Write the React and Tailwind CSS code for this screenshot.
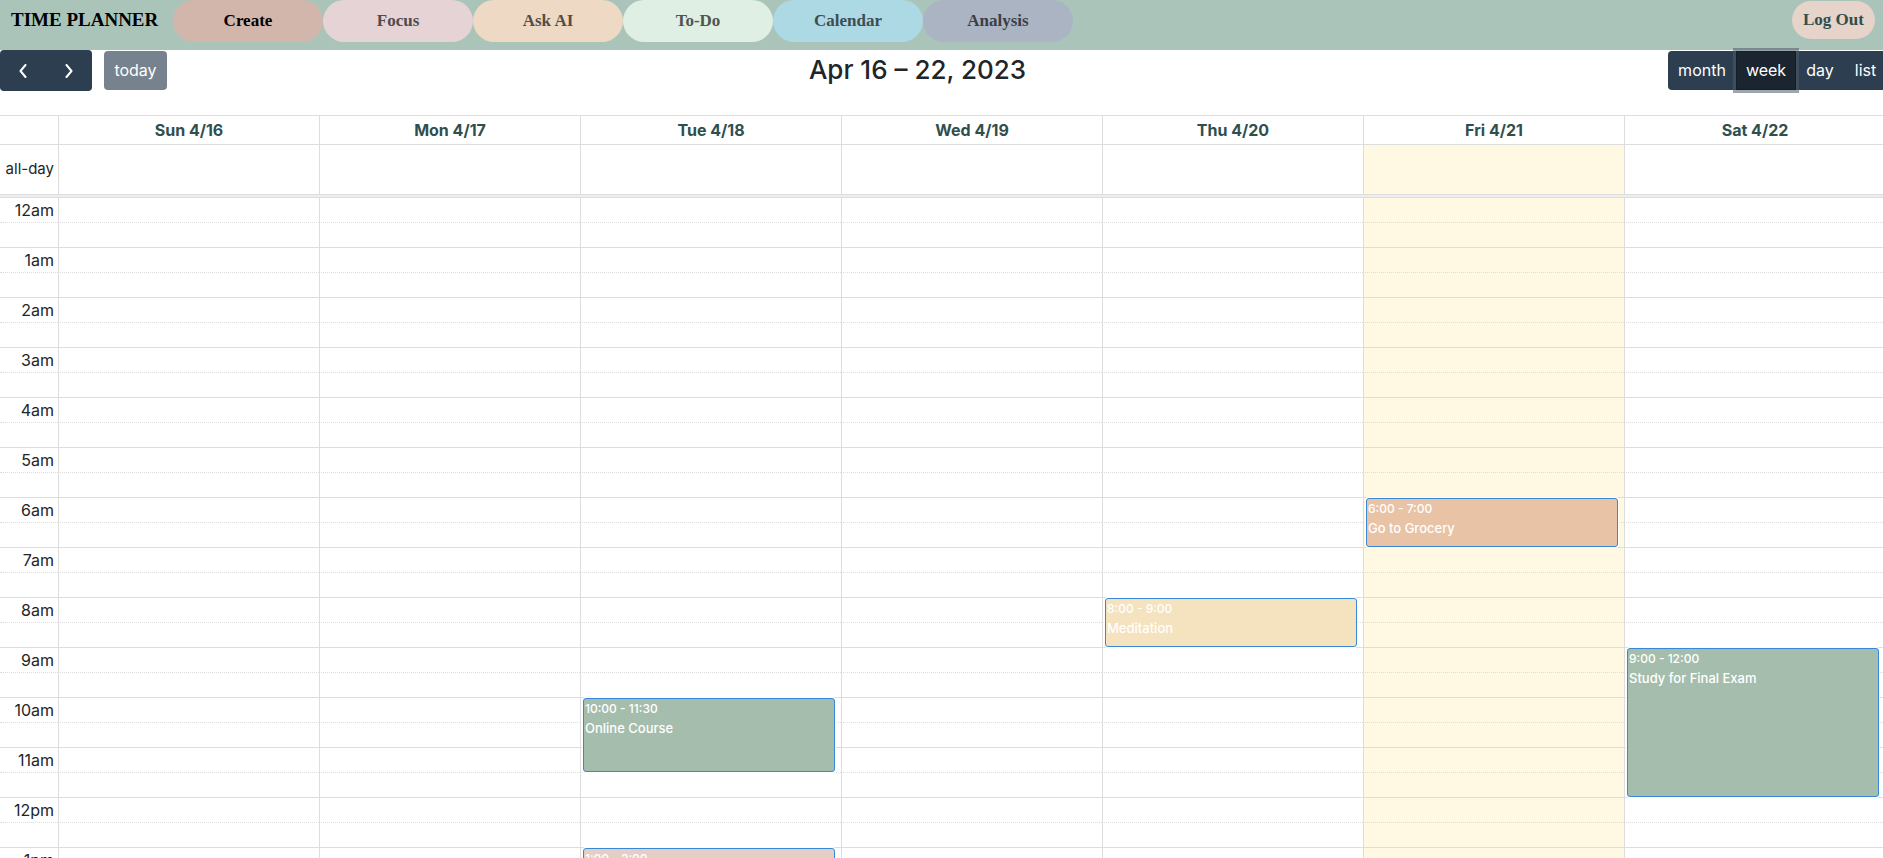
import React from "react";

const NAV = [
  { label: "Create", style: "bg-[#d3b6ab] text-black" },
  { label: "Focus", style: "bg-[#e6d3d5] text-[#524b4c]" },
  { label: "Ask AI", style: "bg-[#edd9c4] text-[#544d46]" },
  { label: "To-Do", style: "bg-[#dfefe4] text-[#4f5551]" },
  { label: "Calendar", style: "bg-[#add9e5] text-[#3d4d51]" },
  { label: "Analysis", style: "bg-[#aab4c2] text-[#3c4045]" },
];

const DAYS = [
  { name: "Sun 4/16" },
  { name: "Mon 4/17" },
  { name: "Tue 4/18" },
  { name: "Wed 4/19" },
  { name: "Thu 4/20" },
  { name: "Fri 4/21", today: true },
  { name: "Sat 4/22" },
];

const HOURS = [
  "12am", "1am", "2am", "3am", "4am", "5am", "6am",
  "7am", "8am", "9am", "10am", "11am", "12pm", "1pm",
];

// size is the event's length in 50px hours, less the 1px gap below it
const EVENTS = [
  { day: 5, hour: 6, time: "6:00 - 7:00", title: "Go to Grocery", style: "h-[49px] bg-[#e8c3a6]" },
  { day: 4, hour: 8, time: "8:00 - 9:00", title: "Meditation", style: "h-[49px] bg-[#f5e2be]" },
  { day: 6, hour: 9, time: "9:00 - 12:00", title: "Study for Final Exam", style: "h-[149px] bg-[#a5bdac]" },
  { day: 2, hour: 10, time: "10:00 - 11:30", title: "Online Course", style: "h-[74px] bg-[#a5bdac]" },
  { day: 2, hour: 13, time: "1:00 - 2:00", title: "", style: "h-[49px] bg-[#e4cfc6]" },
];

function Chevron({ d }) {
  return (
    <svg width="8" height="14" viewBox="0 0 8 14" fill="none" stroke="currentColor" strokeWidth="2" strokeLinecap="round" strokeLinejoin="round" aria-hidden="true">
      <path d={d} />
    </svg>
  );
}

function NavBar() {
  return (
    <header className="flex h-[50px] shrink-0 items-start bg-[#aac4b9] pr-2 font-['Liberation_Serif',serif] font-bold">
      <a href="#home" className="w-[173px] pl-[11px] text-[19px] leading-10 text-black whitespace-nowrap">TIME PLANNER</a>
      <nav className="flex">
        {NAV.map((n) => (
          <button key={n.label} className={"h-[42px] w-[150px] rounded-[21px] text-[17px] " + n.style}>{n.label}</button>
        ))}
      </nav>
      <button className="mt-px ml-auto h-[38px] w-[83px] rounded-[19px] bg-[#e6d3c9] text-[17px] text-[#2f4f4f]">Log Out</button>
    </header>
  );
}

function Toolbar() {
  return (
    <div className="flex h-[41px] items-center justify-between">
      <div className="flex items-center gap-3 text-white">
        <div className="flex h-[41px] overflow-hidden rounded-[4px] bg-[#2c3e50]">
          <button aria-label="Previous week" className="flex w-[46px] items-center justify-center"><Chevron d="M6.5 1 1.5 7l5 6" /></button>
          <button aria-label="Next week" className="flex w-[46px] items-center justify-center"><Chevron d="M1.5 1l5 6-5 6" /></button>
        </div>
        <button className="h-[39px] w-[63px] rounded-[4px] bg-[#76838e] pb-0.5 text-base">today</button>
      </div>
      <h2 className="pb-0.5 text-[26px] font-medium">Apr 16 – 22, 2023</h2>
      <div className="flex h-[39px] rounded-[4px] bg-[#2c3e50] text-base text-white">
        <button className="w-[68px] pb-0.5">month</button>
        <button aria-pressed="true" className="relative w-[60px] border border-[#151e27] bg-[#1a252f] pb-0.5 shadow-[0_0_0_3px_rgba(76,91,106,0.55)]">week</button>
        <button className="w-[48px] pb-0.5">day</button>
        <button className="w-[43px] pb-0.5">list</button>
      </div>
    </div>
  );
}

function Event({ event }) {
  return (
    <div className={"absolute top-0 right-[6px] left-[2px] z-10 overflow-hidden rounded-[3px] border border-[#3788d8] px-px pt-px font-medium text-white shadow-[0_0_0_1px_#fff] " + event.style}>
      <div className="text-[12px] leading-[18px]">{event.time}</div>
      <div className="text-[13px] leading-5">{event.title}</div>
    </div>
  );
}

function WeekGrid() {
  const line = "border-[#dddddd] ";
  const fill = (d) => (d.today ? "bg-[#fff8e2] " : "");
  return (
    <div className="mt-6 pr-[2px]">
      <table className="w-full table-fixed border-separate border-spacing-0 text-base leading-6">
        <colgroup>
          <col className="w-[58px]" />
          {DAYS.map((d) => <col key={d.name} />)}
        </colgroup>
        <thead>
          <tr className="h-[29px]">
            <td className={line + "border-t"} />
            {DAYS.map((d) => (
              <th key={d.name} scope="col" className={line + "border-t border-l p-0 font-bold text-[#2f4f4f]"}>{d.name}</th>
            ))}
          </tr>
        </thead>
        <tbody>
          <tr className="h-[50px]">
            <th scope="row" className={line + "border-t p-0 pr-1 pb-0.5 text-right text-[15px] font-normal"}>all-day</th>
            {DAYS.map((d) => <td key={d.name} className={line + fill(d) + "border-t border-l"} />)}
          </tr>
          <tr className="h-[3px]">
            <td colSpan={8} className={line + "border-t bg-[#eeeeee] p-0"} />
          </tr>
          {HOURS.map((h, i) => (
            <React.Fragment key={h}>
              <tr className="h-[25px]">
                <th scope="row" className={line + "border-t p-0 pr-1 text-right font-normal"}>{h}</th>
                {DAYS.map((d, j) => (
                  <td key={d.name} className={line + fill(d) + "relative border-t border-l p-0"}>
                    {EVENTS.filter((e) => e.day === j && e.hour === i).map((e) => <Event key={e.time} event={e} />)}
                  </td>
                ))}
              </tr>
              <tr className="h-[25px]">
                <td className={line + "border-t [border-top-style:dotted]"} />
                {DAYS.map((d) => (
                  <td key={d.name} className={line + fill(d) + "border-t border-l [border-top-style:dotted]"} />
                ))}
              </tr>
            </React.Fragment>
          ))}
        </tbody>
      </table>
    </div>
  );
}

export default function App() {
  return (
    <div className="flex h-screen flex-col overflow-hidden bg-white font-['Inter',sans-serif] text-[#212529]">
      <NavBar />
      <main className="w-[calc(100%+4px)]">
        <Toolbar />
        <WeekGrid />
      </main>
    </div>
  );
}
